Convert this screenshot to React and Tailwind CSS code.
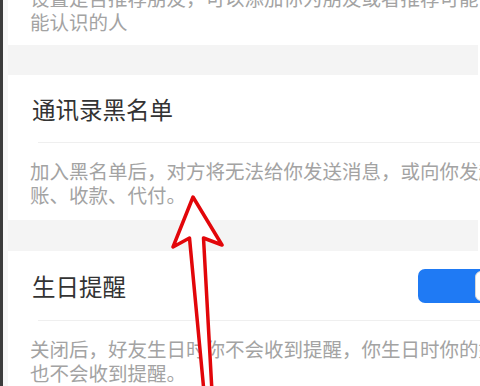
const font = { fontFamily: '"Noto Sans CJK SC", "Noto Sans", sans-serif' };

const Toggle = () => (
  <div className="relative h-[34px] w-[92px] shrink-0 -mr-[32px] rounded-[7px] bg-[#1f7af4]">
    <div className="absolute right-[2px] top-[2px] h-[30px] w-[33px] rounded-[6px] border border-[#d8d8d8] bg-white" />
  </div>
);

const Section = ({ title, desc, right }) => (
  <div className="bg-white">
    <div className="flex items-center justify-between pl-[24px] pr-[2px] pt-[18px] pb-[17px]">
      <span className="text-[23.5px] leading-[32px] text-[#333]">{title}</span>
      {right}
    </div>
    <div className="ml-[30px] h-px bg-[#efefef]" />
    <p className="whitespace-nowrap pl-[22px] pt-[16px] pb-[13px] text-[19.5px] leading-[24px] text-[#a3a3a3]">
      {desc[0]}
      <br />
      {desc[1]}
    </p>
  </div>
);

export default function App() {
  return (
    <div className="relative flex h-[386px] w-[480px] overflow-hidden bg-white" style={font}>
      <div className="w-[3px] shrink-0 bg-[#3c3c3c]" />
      <div className="w-[5px] shrink-0 bg-[#f7f7f7]" />
      <div className="flex-1 min-w-0 overflow-hidden">
        <p className="-mt-[14px] whitespace-nowrap pl-[22px] pb-[11px] text-[19.5px] leading-[24px] text-[#a3a3a3]">
          设置是否推荐朋友，可以添加你为朋友或者推荐可能
          <br />
          能认识的人
        </p>
        <div className="h-[30px] bg-[#f4f4f4] mr-[2px]" />
        <Section
          title="通讯录黑名单"
          desc={['加入黑名单后，对方将无法给你发送消息，或向你发起转', '账、收款、代付。']}
        />
        <div className="h-[31px] bg-[#f4f4f4] mr-[2px]" />
        <Section
          title="生日提醒"
          right={<Toggle />}
          desc={['关闭后，好友生日时你不会收到提醒，你生日时你的好友', '也不会收到提醒。']}
        />
      </div>

      {/* red arrow drawn over the screenshot */}
      <svg className="pointer-events-none absolute inset-0" width="480" height="386" viewBox="0 0 480 386">
        <path
          d="M193 197 L222 245 L203.5 238 L212 392 L204 392 L189.5 238 L173 247 Z"
          fill="#ffffff"
          stroke="#e2060a"
          strokeWidth="3.5"
          strokeLinejoin="round"
        />
      </svg>
    </div>
  );
}
